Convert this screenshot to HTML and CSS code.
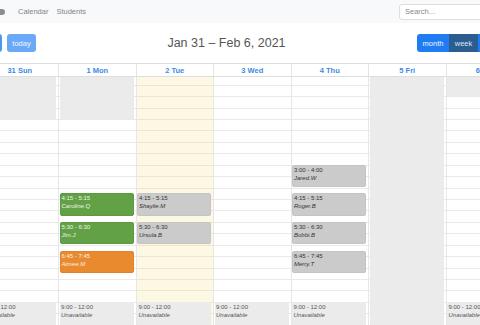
FILE: index.html
```html
<!DOCTYPE html>
<html>
<head>
<meta charset="utf-8">
<link rel="stylesheet" href="styles.css">
</head>
<body>
<nav class="navbar">
  <span class="brand"></span>
  <span class="nav-link first">Calendar</span>
  <span class="nav-link">Students</span>
  <div class="search">Search...</div>
</nav>

<div class="toolbar">
  <div class="btn-group">
    <div class="btn btn-first w26"><svg width="6" height="8" viewBox="0 0 6 8"><path d="M4.5 1 L1.5 4 L4.5 7" fill="none" stroke="#fff" stroke-width="1.2"/></svg></div>
    <div class="btn btn-last w26"><svg width="6" height="8" viewBox="0 0 6 8"><path d="M1.5 1 L4.5 4 L1.5 7" fill="none" stroke="#fff" stroke-width="1.2"/></svg></div>
  </div>
  <div class="btn btn-today">today</div>
  <div class="title">Jan 31 – Feb 6, 2021</div>
  <div class="btn-group">
    <div class="btn btn-first w32">month</div>
    <div class="btn btn-active w29">week</div>
    <div class="btn btn-last w32">day</div>
  </div>
</div>

<div class="cal">
  <div class="cal-head">
    <div class="axis-head"></div>
    <div class="head-cell">31 Sun</div>
    <div class="head-cell">1 Mon</div>
    <div class="head-cell">2 Tue</div>
    <div class="head-cell">3 Wed</div>
    <div class="head-cell">4 Thu</div>
    <div class="head-cell">5 Fri</div>
    <div class="head-cell">6 Sat</div>
  </div>
  <div class="cal-body">
    <div class="axis"></div>
    <div class="day">
      <div class="ev bg-block" style="top:0;height:42px"></div>
      <div class="ev unavail" style="top:224.9px;height:30px"><div>9:00 - 12:00</div><div class="who">Unavailable</div></div>
    </div>
    <div class="day">
      <div class="ev bg-block" style="top:0;height:42px"></div>
      <div class="ev green" style="top:116.3px;height:22.5px"><div>4:15 - 5:15</div><div class="who">Caroline.Q</div></div>
      <div class="ev green" style="top:144.9px;height:22.5px"><div>5:30 - 6:30</div><div class="who">Jim.J</div></div>
      <div class="ev orange" style="top:173.5px;height:22.5px"><div>6:45 - 7:45</div><div class="who">Aimee.M</div></div>
      <div class="ev unavail" style="top:224.9px;height:30px"><div>9:00 - 12:00</div><div class="who">Unavailable</div></div>
    </div>
    <div class="day today">
      <div class="ev gray" style="top:116.3px;height:22.5px"><div>4:15 - 5:15</div><div class="who">Shaylie.M</div></div>
      <div class="ev gray" style="top:144.9px;height:22.5px"><div>5:30 - 6:30</div><div class="who">Ursula.B</div></div>
      <div class="ev unavail" style="top:224.9px;height:30px"><div>9:00 - 12:00</div><div class="who">Unavailable</div></div>
    </div>
    <div class="day">
      <div class="ev unavail" style="top:224.9px;height:30px"><div>9:00 - 12:00</div><div class="who">Unavailable</div></div>
    </div>
    <div class="day">
      <div class="ev gray" style="top:87.7px;height:22.5px"><div>3:00 - 4:00</div><div class="who">Jared.W</div></div>
      <div class="ev gray" style="top:116.3px;height:22.5px"><div>4:15 - 5:15</div><div class="who">Roger.B</div></div>
      <div class="ev gray" style="top:144.9px;height:22.5px"><div>5:30 - 6:30</div><div class="who">Bobbi.B</div></div>
      <div class="ev gray" style="top:173.5px;height:22.5px"><div>6:45 - 7:45</div><div class="who">Merry.T</div></div>
      <div class="ev unavail" style="top:224.9px;height:30px"><div>9:00 - 12:00</div><div class="who">Unavailable</div></div>
    </div>
    <div class="day">
      <div class="ev bg-block" style="top:0;height:260px"></div>
    </div>
    <div class="day">
      <div class="ev bg-block" style="top:0;height:19px"></div>
      <div class="ev unavail" style="top:224.9px;height:30px"><div>9:00 - 12:00</div><div class="who">Unavailable</div></div>
    </div>
  </div>
</div>
</body>
</html>
```
FILE: styles.css
```css
html, body {
  margin: 0;
  overflow: hidden;
}
body {
  width: 480px;
  height: 325px;
  background: #fff;
  font-family: "Liberation Sans", Arial, sans-serif;
}

/* navbar */
.navbar {
  display: flex;
  align-items: center;
  height: 23px;
  background: #f8f9fa;
  margin-right: -20px;
}
.brand {
  width: 11px;
  height: 6px;
  border-radius: 3px;
  background: #8d8d8d;
  margin-left: -6px;
}
.nav-link {
  font-size: 7.5px;
  color: #858585;
}
.nav-link.first { margin-left: 13px; }
.nav-link + .nav-link { margin-left: 8px; }
.search {
  margin-left: auto;
  width: 101px;
  height: 16px;
  box-sizing: border-box;
  border: 1px solid #dedede;
  border-radius: 3px;
  background: #fff;
  font-size: 7.5px;
  color: #8a8a8a;
  padding-left: 5px;
  display: flex;
  align-items: center;
}

/* toolbar */
.toolbar {
  display: flex;
  align-items: center;
  height: 18px;
  margin: 11px -30px 0 -50px;
}
.btn-group { display: flex; }
.btn {
  height: 18px;
  box-sizing: border-box;
  display: flex;
  align-items: center;
  justify-content: center;
  font-size: 7.5px;
  color: #f2f7ff;
  background: #1f7cf2;
}
.btn-group .btn-first { border-radius: 3px 0 0 3px; }
.btn-group .btn-last { border-radius: 0 3px 3px 0; }
.w26 { width: 26px; background: #4a98f6; }
.w29 { width: 29px; }
.w32 { width: 32px; }
.btn-active { background: #2c5d91; color: #dde6f0; }
.btn-today {
  width: 29px;
  margin-left: 5px;
  border-radius: 3px;
  background: #6aa9f8;
}
.title {
  flex: 1;
  text-align: center;
  font-size: 12.5px;
  color: #555;
}

/* calendar */
.cal {
  margin: 11px 0 0 -60px;
  width: 583px;
}
.cal-head, .cal-body {
  display: grid;
  grid-template-columns: 40.5px repeat(7, 77.5px);
}
.cal-head {
  height: 12px;
  border-top: 1px solid #dedede;
  border-bottom: 1px solid #dedede;
}
.head-cell {
  border-left: 1px solid #e4e4e4;
  display: flex;
  align-items: center;
  justify-content: center;
  font-size: 7.5px;
  font-weight: bold;
  color: #3d8ae5;
}
.cal-body {
  height: 248px;
  overflow: hidden;
}
.axis {
  background: repeating-linear-gradient(to bottom, transparent 0 7.7px, #e9e9e9 7.7px 8.7px, transparent 8.7px 11.43px);
}
.day {
  position: relative;
  border-left: 1px solid #e6e6e6;
  background: repeating-linear-gradient(to bottom, transparent 0 7.7px, #e9e9e9 7.7px 8.7px, transparent 8.7px 11.43px);
}
.day.today {
  background: repeating-linear-gradient(to bottom, transparent 0 7.7px, #ece6cc 7.7px 8.7px, transparent 8.7px 11.43px), #fcf8e3;
}

/* events */
.ev {
  position: absolute;
  left: 0.5px;
  right: 2px;
  box-sizing: border-box;
  border-radius: 2px;
  padding: 1px 1.5px;
  font-size: 6px;
  line-height: 8px;
  overflow: hidden;
  white-space: nowrap;
}
.ev .who { font-style: italic; }
.bg-block { background: #ebebeb; border-radius: 0; }
.unavail { background: #ebebeb; color: #555; border-radius: 0; }
.green { background: #62a146; border: 1px solid #5b9a40; color: #eef5e8; padding: 0 1px; }
.orange { background: #e98a2f; border: 1px solid #e0822a; color: #fdf1e2; padding: 0 1px; }
.gray { background: #cbcbcb; border: 1px solid #c4c4c4; color: #333; padding: 0 1px; }
```
